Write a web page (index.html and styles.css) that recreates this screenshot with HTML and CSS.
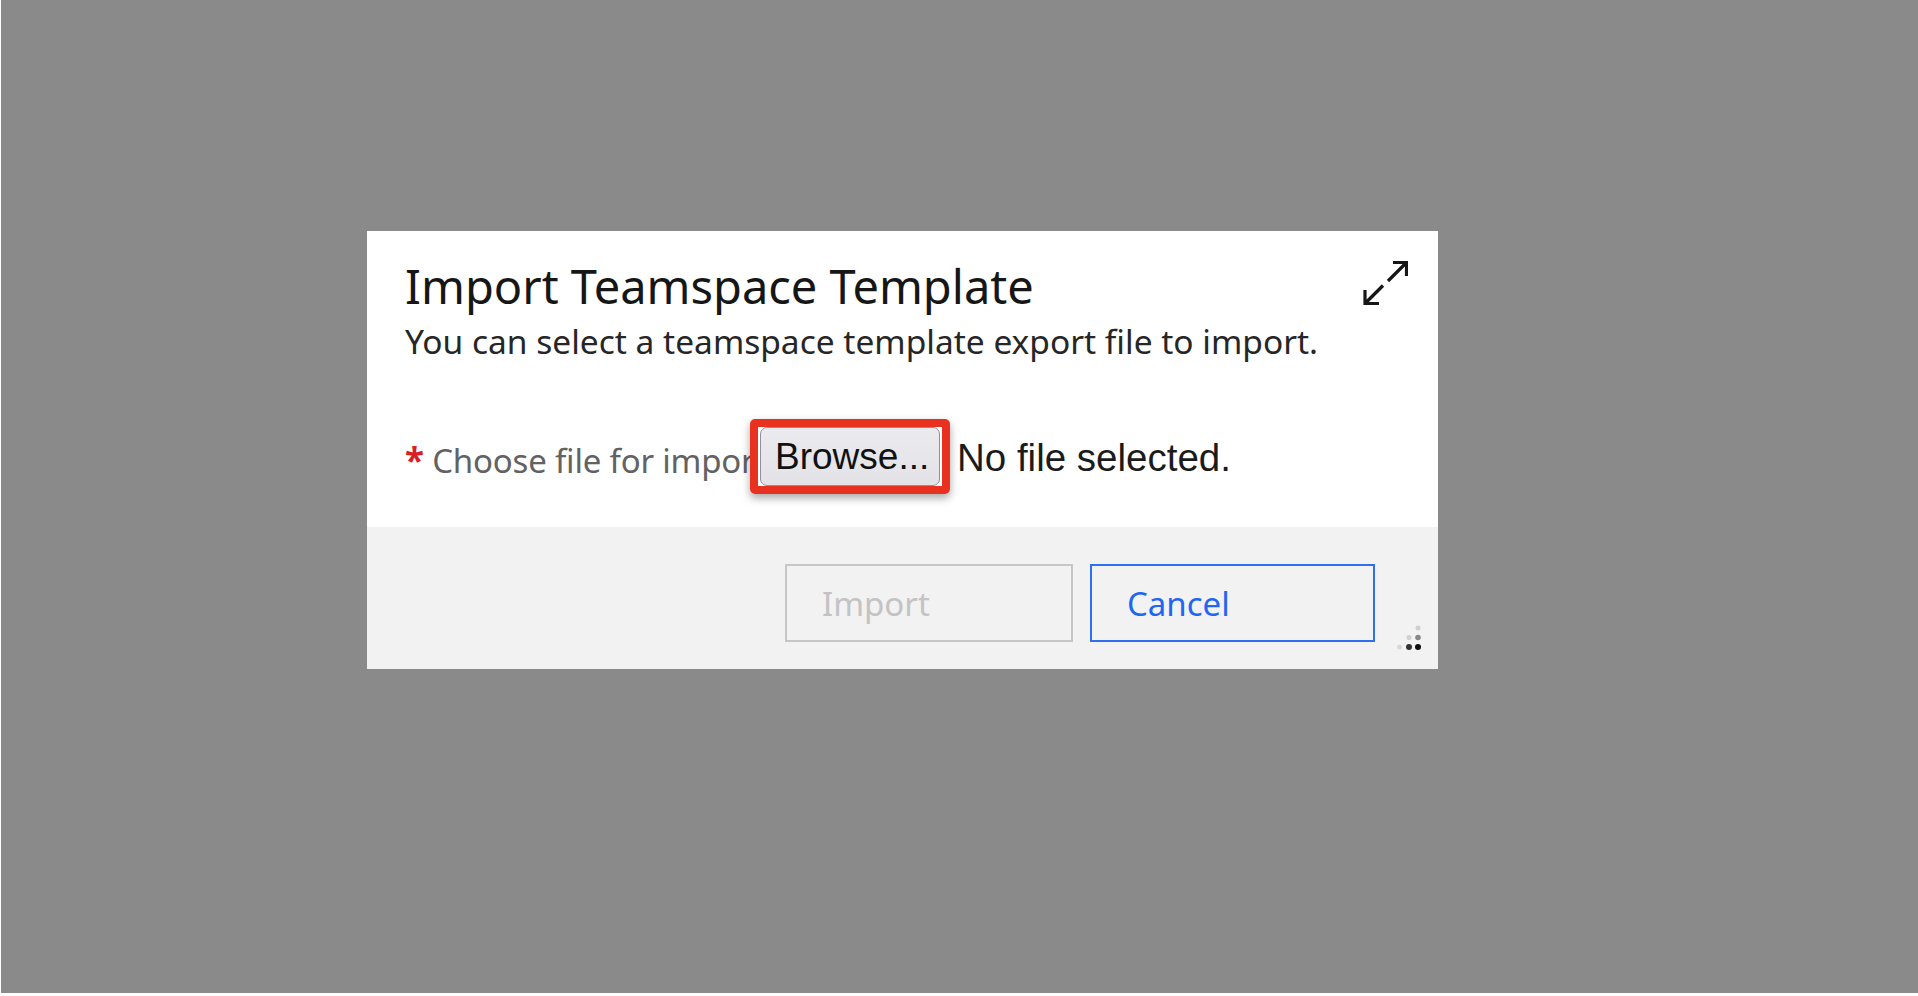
FILE: index.html
```html
<!DOCTYPE html>
<html lang="en">
<head>
<meta charset="utf-8">
<title>Import Teamspace Template</title>
<link rel="stylesheet" href="styles.css">
</head>
<body>
<div class="screen">
  <div class="dialog">
    <div class="dialog-body">
      <div class="header">
        <div class="heading">
          <h1 class="title">Import Teamspace Template</h1>
          <p class="subtitle">You can select a teamspace template export file to import.</p>
        </div>
        <svg class="expand" width="46" height="46" viewBox="0 0 46 46" aria-hidden="true">
          <path d="M31 2.5H44.5V16M44.5 2.5L26 21" fill="none" stroke="#161616" stroke-width="3.2"/>
          <path d="M3 30V43.5H17M3 43.5L21 25.5" fill="none" stroke="#161616" stroke-width="3.2"/>
        </svg>
      </div>
      <div class="file-row">
        <label class="file-label"><span class="req">*</span> Choose file for import</label>
        <div class="highlight">
          <button class="browse" type="button">Browse...</button>
        </div>
        <span class="file-status">No file selected.</span>
      </div>
    </div>
    <div class="dialog-footer">
      <button class="btn btn-disabled" type="button">Import</button>
      <button class="btn btn-secondary" type="button">Cancel</button>
    </div>
    <svg class="grip" width="26" height="26" viewBox="0 0 26 26" aria-hidden="true">
      <circle cx="22" cy="3" r="2.5" fill="#d0d0d0"/>
      <circle cx="13" cy="12.5" r="2.5" fill="#d0d0d0"/>
      <circle cx="22" cy="12.5" r="2.8" fill="#888"/>
      <circle cx="3.5" cy="22" r="2.5" fill="#d8d8d8"/>
      <circle cx="13" cy="22" r="3" fill="#333"/>
      <circle cx="22" cy="22" r="3" fill="#0d0d0d"/>
    </svg>
  </div>
</div>
</body>
</html>
```

FILE: styles.css
```css
html {
  background: #ffffff;
}
body {
  margin: 0;
  font-family: "Noto Sans", "Open Sans", sans-serif;
}
.screen {
  margin-left: 1px;
  height: 993px;
  background: #8a8a8a;
  box-sizing: border-box;
  padding: 231px 0 0 366px;
  display: flex;
  align-items: flex-start;
}
.dialog {
  position: relative;
  width: 1071px;
  height: 438px;
  background: #ffffff;
  display: flex;
  flex-direction: column;
}
.dialog-body {
  height: 296px;
  box-sizing: border-box;
  padding: 27px 30px 0 38px;
  display: flex;
  flex-direction: column;
}
.header {
  display: flex;
  justify-content: space-between;
  align-items: flex-start;
}
.title {
  margin: 0;
  font-size: 47px;
  line-height: 56px;
  font-weight: 400;
  color: #161616;
}
.subtitle {
  margin: 7px 0 0;
  font-size: 33.5px;
  line-height: 40px;
  color: #262626;
}
.expand {
  margin-top: 2px;
  flex: none;
}
.file-row {
  margin-top: 58px;
  display: flex;
  align-items: flex-start;
}
.file-label {
  width: 345px;
  margin-top: 21px;
  white-space: nowrap;
  overflow: hidden;
  font-size: 33px;
  letter-spacing: -0.2px;
  line-height: 40px;
  color: #626262;
}
.req {
  color: #da1e28;
  font-weight: 700;
  font-size: 35px;
}
.highlight {
  width: 200px;
  height: 75px;
  box-sizing: border-box;
  border: 8px solid #e8321f;
  border-radius: 5px;
  padding: 0 2px;
  box-shadow: 0 4px 9px rgba(0, 0, 0, 0.35);
  display: flex;
}
.browse {
  flex: 1;
  margin: 0;
  height: 59px;
  box-sizing: border-box;
  padding: 0 0 0 14px;
  text-align: left;
  border: 1px solid #8f8f9d;
  border-radius: 7px;
  background: linear-gradient(#ebebef, #e2e2e7);
  font-family: "Liberation Sans", Arial, sans-serif;
  font-size: 37px;
  color: #111;
}
.file-status {
  margin: 17px 0 0 7px;
  font-family: "Liberation Sans", Arial, sans-serif;
  font-size: 38.5px;
  line-height: 44px;
  color: #1b1b1b;
  white-space: nowrap;
}
.dialog-footer {
  flex: 1;
  background: #f2f2f2;
  display: flex;
  justify-content: flex-end;
  align-items: flex-start;
  gap: 17px;
  padding: 37px 63px 0 0;
}
.btn {
  height: 78px;
  box-sizing: border-box;
  background: transparent;
  text-align: left;
  padding: 0 0 0 35px;
  font-family: "Noto Sans", "Open Sans", sans-serif;
  font-size: 33px;
}
.btn-disabled {
  width: 288px;
  border: 2px solid #c6c6c6;
  color: #c3c3c3;
}
.btn-secondary {
  width: 285px;
  border: 2px solid #2f6ff2;
  color: #1f66f4;
}
.grip {
  position: absolute;
  right: 16px;
  bottom: 18px;
}
```
